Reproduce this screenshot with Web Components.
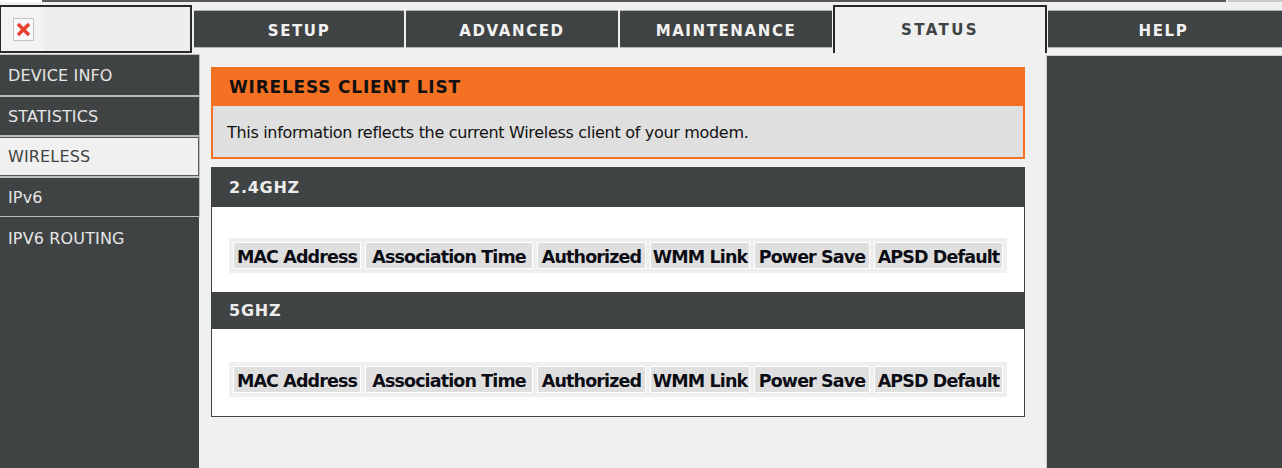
<!DOCTYPE html>
<html>
<head>
<meta charset="utf-8">
<title>Wireless Client List</title>
<style>
  html, body { margin: 0; padding: 0; background: #f0f0f0; }
  body { width: 1282px; height: 468px; overflow: hidden; font-family: "DejaVu Sans", sans-serif; }
</style>
</head>
<body>
<router-page>
  <router-tabs slot="top">
    <router-tab style="width:210px">SETUP</router-tab>
    <router-tab>ADVANCED</router-tab>
    <router-tab>MAINTENANCE</router-tab>
    <router-tab active>STATUS</router-tab>
    <router-tab last>HELP</router-tab>
  </router-tabs>
  <router-nav slot="nav">
    <nav-item style="height:40px">DEVICE INFO</nav-item>
    <nav-item style="height:38px">STATISTICS</nav-item>
    <nav-item active style="height:39px">WIRELESS</nav-item>
    <nav-item style="height:38px">IPv6</nav-item>
    <nav-item style="height:38px" plain>IPV6 ROUTING</nav-item>
  </router-nav>
  <info-panel slot="main" heading="WIRELESS CLIENT LIST">This information reflects the current Wireless client of your modem.</info-panel>
  <client-box slot="main">
    <band-section label="2.4GHZ" style="--bar:39px;--gap:31px;--after:19px"></band-section>
    <band-section label="5GHZ" style="--bar:37px;--gap:33px;--after:19px"></band-section>
  </client-box>
</router-page>

<script>
  class RouterPage extends HTMLElement {
    constructor() {
      super();
      this.attachShadow({ mode: 'open' });
      this.shadowRoot.innerHTML = `
        <style>
          :host { display: block; width: 1282px; height: 468px; background: #f0f0f0; }
          .strip { display: flex; height: 5px; }
          .strip i { display: block; height: 2px; }
          .strip .a { width: 42px; background: #fff; }
          .strip .b { width: 1184px; background: #55595a; }
          .strip .c { width: 2px; }
          .strip .d { flex: 1; background: #c9c9c9; }
          .head { display: grid; grid-template-columns: 194px 1fr; height: 50px; }
          .logo {
            box-sizing: border-box; width: 192px; height: 48px; padding: 11px 0 0 11px;
            border: 2px solid #26292a; border-left-width: 1px;
            background: linear-gradient(to right, #f3f3f3 43px, #eeeeee 43px);
          }
          .logo svg { display: block; margin-left: 1px; }
          .body { display: grid; grid-template-columns: 199px 847px 236px; height: 413px; }
          .main { padding: 12px 21px 0 12px; }
          .right { background: #404344; border-left: 1px solid #cfcfcf; border-top: 1px solid #cfcfcf; box-sizing: border-box; }
        </style>
        <div class="strip"><i class="a"></i><i class="b"></i><i class="c"></i><i class="d"></i></div>
        <div class="head">
          <div class="logo">
            <svg width="21" height="23" viewBox="0 0 21 23">
              <rect x="0.5" y="0.5" width="20" height="22" fill="#fafafa" stroke="#c4c4c4"/>
              <path d="M5 6 L16 17 M16 6 L5 17" stroke="#e8402f" stroke-width="3.4" fill="none"/>
            </svg>
          </div>
          <slot name="top"></slot>
        </div>
        <div class="body">
          <slot name="nav"></slot>
          <div class="main"><slot name="main"></slot></div>
          <div class="right"></div>
        </div>
      `;
    }
  }
  customElements.define('router-page', RouterPage);

  class RouterTabs extends HTMLElement {
    constructor() {
      super();
      this.attachShadow({ mode: 'open' });
      this.shadowRoot.innerHTML = `
        <style>
          :host { display: flex; gap: 2px; height: 50px; align-items: flex-start; }
        </style>
        <slot></slot>
      `;
    }
  }
  customElements.define('router-tabs', RouterTabs);

  class RouterTab extends HTMLElement {
    constructor() {
      super();
      this.attachShadow({ mode: 'open' });
      this.shadowRoot.innerHTML = `
        <style>
          :host {
            display: flex; box-sizing: border-box; width: 212px; height: 38px; margin-top: 5px; padding-top: 3px;
            align-items: center; justify-content: center;
            background: #404344; color: #f2f2f2; border-top: 1px solid #b5b5b5; border-bottom: 1px solid #b5b5b5;
            font: bold 15px "DejaVu Sans", sans-serif; letter-spacing: 1.6px;
          }
          :host([last]) { flex: 1; width: auto; padding-right: 3px; }
          :host([active]) {
            width: 214px; height: 48px; margin: 0 -1px; padding: 5px 0 5px 0;
            background: #f0f0f0; color: #404344; letter-spacing: 2.4px;
            border: 2px solid #26292a; border-bottom: 0;
          }
        </style>
        <slot></slot>
      `;
    }
  }
  customElements.define('router-tab', RouterTab);

  class RouterNav extends HTMLElement {
    constructor() {
      super();
      this.attachShadow({ mode: 'open' });
      this.shadowRoot.innerHTML = `
        <style>
          :host {
            display: flex; flex-direction: column; gap: 2px; height: 413px;
            background: #404344; box-sizing: border-box;
          }
        </style>
        <slot></slot>
      `;
    }
  }
  customElements.define('router-nav', RouterNav);

  class NavItem extends HTMLElement {
    constructor() {
      super();
      this.attachShadow({ mode: 'open' });
      this.shadowRoot.innerHTML = `
        <style>
          :host {
            display: flex; box-sizing: border-box; align-items: center; padding: 0 0 0 8px;
            background: #404344; color: #e6e6e6; outline: 1px solid #bdbdbd; outline-offset: 0;
            font: 16px "DejaVu Sans", sans-serif; letter-spacing: 0.15px;
          }
          :host([plain]) { outline: 0; padding-top: 3px; }
          :host([active]) { background: #f0f0f0; color: #404344; border: 1px solid #55595a; border-left: 0; }
        </style>
        <slot></slot>
      `;
    }
  }
  customElements.define('nav-item', NavItem);

  class InfoPanel extends HTMLElement {
    constructor() {
      super();
      this.attachShadow({ mode: 'open' });
      this.shadowRoot.innerHTML = `
        <style>
          :host { display: block; box-sizing: border-box; width: 814px; height: 92px; background: #f47023; margin-bottom: 8px; }
          h2 {
            margin: 0; height: 39px; box-sizing: border-box; padding-left: 18px;
            font: bold 17px/41px "DejaVu Sans", sans-serif; letter-spacing: 0.8px; color: #111;
          }
          p {
            box-sizing: border-box; margin: 0 2px; height: 51px; padding-left: 14px;
            background: #dfdfdf; color: #111; line-height: 53px;
            font-size: 16px; letter-spacing: -0.31px;
          }
        </style>
        <h2></h2>
        <p><slot></slot></p>
      `;
      this.shadowRoot.querySelector('h2').textContent = this.getAttribute('heading');
    }
  }
  customElements.define('info-panel', InfoPanel);

  class ClientBox extends HTMLElement {
    constructor() {
      super();
      this.attachShadow({ mode: 'open' });
      this.shadowRoot.innerHTML = `
        <style>
          :host {
            display: block; box-sizing: border-box; width: 814px; height: 250px;
            background: #fff; border: 1px solid #404344;
          }
        </style>
        <slot></slot>
      `;
    }
  }
  customElements.define('client-box', ClientBox);

  class BandSection extends HTMLElement {
    constructor() {
      super();
      this.attachShadow({ mode: 'open' });
      this.shadowRoot.innerHTML = `
        <style>
          :host { display: block; }
          .bar {
            height: var(--bar); box-sizing: border-box; padding: 0 0 1px 17px;
            display: flex; align-items: center;
            background: #404344; color: #ececec;
            font: bold 16px "DejaVu Sans", sans-serif; letter-spacing: 0.75px;
          }
          .wrap { padding: var(--gap) 0 var(--after) 17px; }
        </style>
        <div class="bar"></div>
        <div class="wrap"><client-table></client-table></div>
      `;
      this.shadowRoot.querySelector('.bar').textContent = this.getAttribute('label');
    }
  }

  class ClientTable extends HTMLElement {
    constructor() {
      super();
      this.attachShadow({ mode: 'open' });
      const cols = [
        ['MAC Address', 128], ['Association Time', 168], ['Authorized', 109],
        ['WMM Link', 100], ['Power Save', 116], ['APSD Default', 129]
      ];
      this.shadowRoot.innerHTML = `
        <style>
          :host {
            display: flex; box-sizing: border-box; width: 778px; height: 35px; gap: 4px;
            padding: 4px; background: #efefef;
          }
          div {
            box-sizing: border-box; height: 27px; border: 1px solid #fff; background: #dfdfdf; padding-top: 2px;
            display: flex; align-items: center; justify-content: center; white-space: nowrap;
            font: bold 17.5px "DejaVu Sans", sans-serif; letter-spacing: -0.88px; color: #0c0c14;
          }
        </style>
        ${cols.map(c => `<div style="width:${c[1]}px">${c[0]}</div>`).join('')}
      `;
    }
  }
  customElements.define('client-table', ClientTable);
  customElements.define('band-section', BandSection);
</script>
</body>
</html>
